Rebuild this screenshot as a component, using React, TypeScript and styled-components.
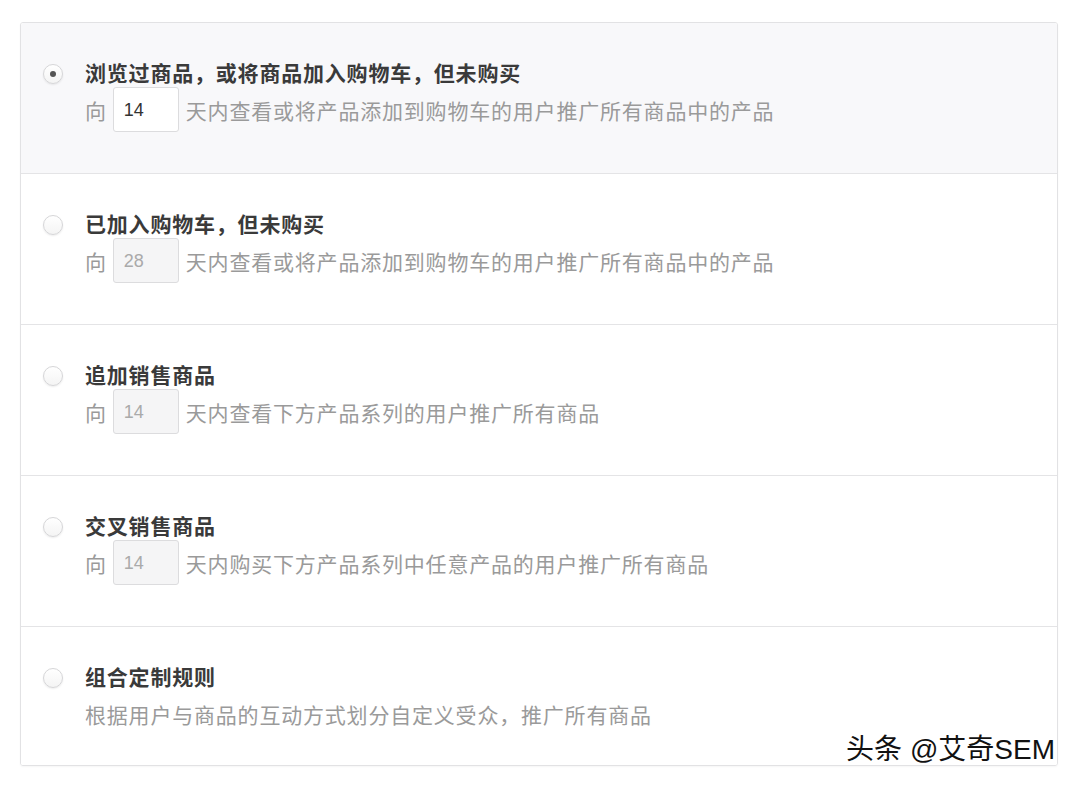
import React from 'react'
import styled, { createGlobalStyle } from 'styled-components'

interface RuleOption {
    id: string
    title: string
    days?: string
    desc: string
}

const options: RuleOption[] = [
    { id: 'viewed', title: '浏览过商品，或将商品加入购物车，但未购买', days: '14', desc: '天内查看或将产品添加到购物车的用户推广所有商品中的产品' },
    { id: 'cart', title: '已加入购物车，但未购买', days: '28', desc: '天内查看或将产品添加到购物车的用户推广所有商品中的产品' },
    { id: 'upsell', title: '追加销售商品', days: '14', desc: '天内查看下方产品系列的用户推广所有商品' },
    { id: 'cross', title: '交叉销售商品', days: '14', desc: '天内购买下方产品系列中任意产品的用户推广所有商品' },
    { id: 'custom', title: '组合定制规则', desc: '根据用户与商品的互动方式划分自定义受众，推广所有商品' },
]

const App: React.FC = () => {
    const [selected, setSelected] = React.useState('viewed')

    return (
        <>
            <GlobalStyle />
            <Page>
                <Card>
                    {options.map(option => {
                        const active = option.id === selected
                        return (
                            <Row key={option.id} $active={active} onClick={() => setSelected(option.id)}>
                                <Radio $checked={active} />
                                <Content>
                                    <Title>{option.title}</Title>
                                    <Detail>
                                        {option.days ? (
                                            <>
                                                <span>向</span>
                                                <DaysInput value={option.days} disabled={!active} readOnly />
                                                <span>{option.desc}</span>
                                            </>
                                        ) : (
                                            <span>{option.desc}</span>
                                        )}
                                    </Detail>
                                </Content>
                            </Row>
                        )
                    })}
                </Card>
                <Watermark>头条 @艾奇SEM</Watermark>
            </Page>
        </>
    )
}

export default App

const GlobalStyle = createGlobalStyle`
    body {
        margin: 0;
        background: #ffffff;
        font-family: 'Noto Sans CJK SC', 'Liberation Sans', sans-serif;
    }
`

const Page = styled.div`
    position: relative;
    width: 1080px;
    height: 788px;
    padding: 22px 0 0 20px;
    box-sizing: border-box;
`

const Card = styled.div`
    width: 1038px;
    border: 1px solid #e2e2e4;
    border-radius: 3px;
    box-sizing: border-box;
    overflow: hidden;
    box-shadow: 0 1px 2px rgba(0, 0, 0, 0.04);
`

const Row = styled.div<{ $active: boolean }>`
    display: flex;
    align-items: flex-start;
    gap: 22px;
    padding: 36px 0 41px 22px;
    background: ${p => (p.$active ? '#f8f8fa' : '#ffffff')};
    border-bottom: 1px solid #e4e4e6;
    cursor: pointer;

    &:last-child {
        border-bottom: none;
        padding-bottom: 29px;
    }
`

const Radio = styled.span<{ $checked: boolean }>`
    position: relative;
    flex: none;
    width: 20px;
    height: 20px;
    margin-top: 5px;
    border-radius: 50%;
    border: 1px solid #d6d6d8;
    box-sizing: border-box;
    background: linear-gradient(#ffffff, #f4f4f4);
    box-shadow: 0 1px 2px rgba(0, 0, 0, 0.08);

    &::after {
        content: '';
        display: ${p => (p.$checked ? 'block' : 'none')};
        position: absolute;
        top: 6px;
        left: 6px;
        width: 6px;
        height: 6px;
        border-radius: 50%;
        background: #555;
    }
`

const Content = styled.div`
    display: flex;
    flex-direction: column;
    gap: 2px;
`

const Title = styled.div`
    font-size: 21px;
    line-height: 26px;
    letter-spacing: 0.8px;
    font-weight: bold;
    color: #3a3a3a;
`

const Detail = styled.div`
    display: flex;
    align-items: center;
    gap: 7px;
    height: 45px;
    font-size: 21px;
    letter-spacing: 0.8px;
    color: #9a9a9a;
`

const DaysInput = styled.input`
    width: 66px;
    height: 45px;
    margin-left: -1px;
    box-sizing: border-box;
    padding: 2px 0 0 10px;
    border: 1px solid #dcdcde;
    border-radius: 3px;
    background: #ffffff;
    font-family: 'Liberation Sans', sans-serif;
    font-size: 18px;
    color: #333;
    outline: none;

    &:disabled {
        background: #f5f5f6;
        color: #aaa;
    }
`

const Watermark = styled.div`
    position: absolute;
    right: 25px;
    top: 730px;
    font-size: 28px;
    line-height: 40px;
    color: #111;
    font-family: 'Liberation Sans', 'Noto Sans CJK SC', sans-serif;
    text-shadow: 1px 1px 0 #fff, -1px -1px 0 #fff, 1px -1px 0 #fff, -1px 1px 0 #fff;
    white-space: nowrap;
`
